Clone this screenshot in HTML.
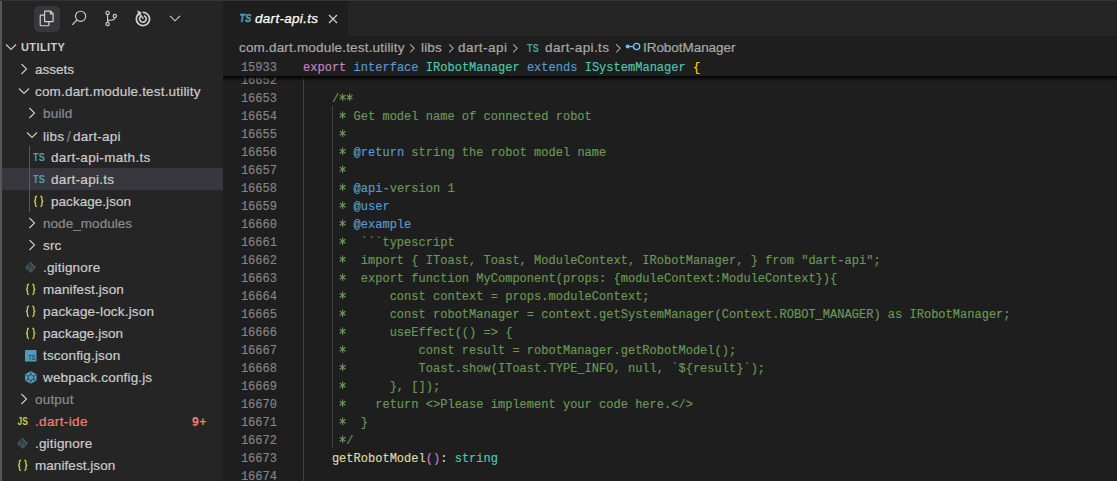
<!DOCTYPE html><html><head><meta charset="utf-8"><style>
*{margin:0;padding:0;box-sizing:border-box}
html,body{width:1117px;height:481px;overflow:hidden;background:#1e1e1e}
body{position:relative;font-family:"Liberation Sans",sans-serif}
#side{position:absolute;left:0;top:0;width:223px;height:481px;background:#252526;overflow:hidden}
#lb{position:absolute;left:0;top:0;width:2px;height:481px;background:#575757;z-index:9}
#topline{position:absolute;left:0;top:0;width:1117px;height:1px;background:#333333;z-index:10}
.abi{position:absolute;top:6px;width:26px;height:26px}
.abi.act{background:#37373d;border-radius:5px}
.row{position:absolute;left:0;width:223px;height:22px;font-size:13.5px;line-height:22px;color:#cccccc;white-space:nowrap;letter-spacing:0.18px}
.row.sel{background:#37373d;left:2px;width:221px}
.t{position:absolute;top:1px;-webkit-text-stroke:0.2px currentColor}
.ic{position:absolute;top:0}
.dim{color:#8c8c8c}
.red{color:#f08070}
#hdr{position:absolute;left:21px;top:36px;height:22px;line-height:22px;font-size:11px;font-weight:bold;color:#cccccc;letter-spacing:0.4px}
#editor{position:absolute;left:223px;top:0;width:894px;height:481px;background:#1e1e1e;overflow:hidden}
#tabs{position:absolute;left:0;top:0;width:894px;height:36px;background:#252526}
#tab{position:absolute;left:0;top:0;width:125px;height:36px;background:#1e1e1e}
#bc{position:absolute;left:0;top:37px;height:22px;width:894px;font-size:13.5px;line-height:22px;color:#a9a9a9;white-space:nowrap;letter-spacing:0.18px}
#bc span{position:absolute;top:0;-webkit-text-stroke:0.2px currentColor}
.code{font-family:"Liberation Mono",monospace;font-size:12.04px;line-height:18px;white-space:pre;height:18px;position:absolute;-webkit-text-stroke:0.15px currentColor}
.ln{left:0;width:54px;text-align:right;color:#858585}
.cl{left:80px}
#sticky{position:absolute;left:0;top:58px;width:894px;height:18px;background:#1e1e1e;z-index:5}
#shadow{position:absolute;left:0;top:76px;width:894px;height:5px;background:linear-gradient(rgba(0,0,0,0.95),rgba(0,0,0,0.7) 30%,rgba(0,0,0,0));z-index:5}
.c{color:#6a9955}.k{color:#569cd6}.p{color:#c586c0}.ty{color:#4ec9b0}.y{color:#ffd700}.f{color:#dcdcaa}.m{color:#da70d6}.w{color:#d4d4d4}.v{color:#9cdcfe}
.ast{vertical-align:top;display:inline-block}
.guide{position:absolute;width:1px;background:#404040}
</style></head><body>
<div id="topline"></div>
<div id="side"><div id="lb"></div>
<div class="abi act" style="left:34px"></div>
<svg style="position:absolute;left:34px;top:6px" width="26" height="26" viewBox="34 6 26 26" fill="none" stroke="#d4d4d4" stroke-width="1.15" stroke-linejoin="round">
<path d="M44.6 21.6 V11.8 Q44.6 11.1 45.3 11.1 H50.6 L53.1 13.6 V20.9 Q53.1 21.6 52.4 21.6 Z"/><path d="M50.4 11.2 V13.8 H53"/><path d="M44.4 15.1 H40.9 Q40.2 15.1 40.2 15.8 V25 Q40.2 25.7 40.9 25.7 H48.2 Q48.9 25.7 48.9 25 V21.8"/></svg>
<svg style="position:absolute;left:68px;top:6px" width="24" height="24" viewBox="68 6 24 24" fill="none" stroke="#cccccc" stroke-width="1.15">
<circle cx="80.6" cy="16.3" r="5.1"/><path d="M76.9 20 L72.3 24.8"/></svg>
<svg style="position:absolute;left:100px;top:6px" width="24" height="24" viewBox="100 6 24 24" fill="none" stroke="#cccccc" stroke-width="1.15">
<circle cx="107.6" cy="12.9" r="1.7"/><circle cx="107.6" cy="24" r="1.7"/><circle cx="114.8" cy="16" r="1.7"/><path d="M107.6 14.6 V22.3"/><path d="M114.8 17.7 C114.8 19.8 112.5 20.3 107.6 20.3"/></svg>
<svg style="position:absolute;left:132px;top:6px" width="24" height="24" viewBox="132 6 24 24" fill="none" stroke="#cfcfcf" stroke-width="1.6">
<path d="M139.6 13.3 A6.6 6.6 0 1 0 142.6 12.4"/><path d="M141 16.2 A3.3 3.3 0 1 0 143.8 15.7"/><path d="M138.5 12.2 L143.4 18.8" stroke-width="1.3"/><path d="M137.6 10.8 L141.4 12.7 L138.9 15.6 Z" fill="#cfcfcf" stroke-width="0.6"/></svg>
<svg style="position:absolute;left:168px;top:14px" width="14" height="9" viewBox="0 0 14 9" fill="none" stroke="#cccccc" stroke-width="1.15">
<path d="M2 1.8 L7 6.8 L12 1.8"/></svg>
<svg style="position:absolute;left:5px;top:43px" width="12" height="8" viewBox="0 0 12 8" fill="none" stroke="#cccccc" stroke-width="1.1"><path d="M1 1.5 L6 6.5 L11 1.5"/></svg>
<div id="hdr">UTILITY</div>
<div class="row" style="top:58px">
<svg style="position:absolute;left:20px;top:5px" width="8" height="12" viewBox="0 0 8 12" fill="none" stroke="#cccccc" stroke-width="1.1"><path d="M1.5 1 L6.5 6 L1.5 11"/></svg>
<span class="t" style="left:35px;letter-spacing:0.0px">assets</span>
</div>
<div class="row" style="top:80px">
<svg style="position:absolute;left:18px;top:7px" width="12" height="8" viewBox="0 0 12 8" fill="none" stroke="#cccccc" stroke-width="1.1"><path d="M1 1.5 L6 6.5 L11 1.5"/></svg>
<span class="t" style="left:35px;letter-spacing:0.18px">com.dart.module.test.utility</span>
</div>
<div class="row" style="top:102px">
<svg style="position:absolute;left:28px;top:5px" width="8" height="12" viewBox="0 0 8 12" fill="none" stroke="#cccccc" stroke-width="1.1"><path d="M1.5 1 L6.5 6 L1.5 11"/></svg>
<span class="t dim" style="left:43px;letter-spacing:0.18px">build</span>
</div>
<div class="row" style="top:124px">
<svg style="position:absolute;left:26px;top:7px" width="12" height="8" viewBox="0 0 12 8" fill="none" stroke="#cccccc" stroke-width="1.1"><path d="M1 1.5 L6 6.5 L11 1.5"/></svg>
<span class="t" style="left:43px;letter-spacing:0.25px">libs<span style="color:#8a8a8a;padding:0 2px 0 2.5px;font-size:14.5px;position:relative;top:0.5px;-webkit-text-stroke:0">/</span>dart-api</span>
</div>
<div class="row" style="top:146px">
<svg class="ic" style="left:33px;top:6px" width="13" height="10" viewBox="0 0 13 10"><text x="0" y="9.3" font-family="Liberation Sans" font-weight="bold" font-size="10.6" textLength="12" lengthAdjust="spacingAndGlyphs" fill="#519aba">TS</text></svg>
<span class="t" style="left:51px;letter-spacing:0.32px">dart-api-math.ts</span>
</div>
<div class="row sel" style="top:168px">
<svg class="ic" style="left:31px;top:6px" width="13" height="10" viewBox="0 0 13 10"><text x="0" y="9.3" font-family="Liberation Sans" font-weight="bold" font-size="10.6" textLength="12" lengthAdjust="spacingAndGlyphs" fill="#519aba">TS</text></svg>
<span class="t" style="left:49px;letter-spacing:0.31px">dart-api.ts</span>
</div>
<div class="row" style="top:190px">
<svg class="ic" style="left:33px;top:5px" width="12" height="13" viewBox="0 0 12 13" fill="none" stroke="#cbcb41" stroke-width="1.35"><path d="M4 1.2 C2.6 1.2 2.4 1.9 2.4 3 V5 C2.4 5.9 2 6.4 0.9 6.4 C2 6.4 2.4 6.9 2.4 7.8 V9.8 C2.4 10.9 2.6 11.6 4 11.6"/><path d="M7.3 1.2 C8.7 1.2 8.9 1.9 8.9 3 V5 C8.9 5.9 9.3 6.4 10.4 6.4 C9.3 6.4 8.9 6.9 8.9 7.8 V9.8 C8.9 10.9 8.7 11.6 7.3 11.6"/></svg>
<span class="t" style="left:51px;letter-spacing:0.04px">package.json</span>
</div>
<div class="row" style="top:212px">
<svg style="position:absolute;left:28px;top:5px" width="8" height="12" viewBox="0 0 8 12" fill="none" stroke="#cccccc" stroke-width="1.1"><path d="M1.5 1 L6.5 6 L1.5 11"/></svg>
<span class="t dim" style="left:43px;letter-spacing:0.05px">node_modules</span>
</div>
<div class="row" style="top:234px">
<svg style="position:absolute;left:28px;top:5px" width="8" height="12" viewBox="0 0 8 12" fill="none" stroke="#cccccc" stroke-width="1.1"><path d="M1.5 1 L6.5 6 L1.5 11"/></svg>
<span class="t" style="left:43px;letter-spacing:0.18px">src</span>
</div>
<div class="row" style="top:256px">
<svg class="ic" style="left:25px;top:5px" width="12" height="13" viewBox="0 0 12 13"><path d="M5.6 0.7 L11.2 6.3 L5.6 11.9 L0 6.3 Z" fill="#41535b"/><path d="M4.3 3.2 V8.6 M4.3 3.2 L7.3 6.2 V8.4" stroke="#252526" stroke-width="0.8" fill="none"/></svg>
<span class="t" style="left:43px;letter-spacing:0.18px">.gitignore</span>
</div>
<div class="row" style="top:278px">
<svg class="ic" style="left:25px;top:5px" width="12" height="13" viewBox="0 0 12 13" fill="none" stroke="#cbcb41" stroke-width="1.35"><path d="M4 1.2 C2.6 1.2 2.4 1.9 2.4 3 V5 C2.4 5.9 2 6.4 0.9 6.4 C2 6.4 2.4 6.9 2.4 7.8 V9.8 C2.4 10.9 2.6 11.6 4 11.6"/><path d="M7.3 1.2 C8.7 1.2 8.9 1.9 8.9 3 V5 C8.9 5.9 9.3 6.4 10.4 6.4 C9.3 6.4 8.9 6.9 8.9 7.8 V9.8 C8.9 10.9 8.7 11.6 7.3 11.6"/></svg>
<span class="t" style="left:43px;letter-spacing:0.11px">manifest.json</span>
</div>
<div class="row" style="top:300px">
<svg class="ic" style="left:25px;top:5px" width="12" height="13" viewBox="0 0 12 13" fill="none" stroke="#cbcb41" stroke-width="1.35"><path d="M4 1.2 C2.6 1.2 2.4 1.9 2.4 3 V5 C2.4 5.9 2 6.4 0.9 6.4 C2 6.4 2.4 6.9 2.4 7.8 V9.8 C2.4 10.9 2.6 11.6 4 11.6"/><path d="M7.3 1.2 C8.7 1.2 8.9 1.9 8.9 3 V5 C8.9 5.9 9.3 6.4 10.4 6.4 C9.3 6.4 8.9 6.9 8.9 7.8 V9.8 C8.9 10.9 8.7 11.6 7.3 11.6"/></svg>
<span class="t" style="left:43px;letter-spacing:0.18px">package-lock.json</span>
</div>
<div class="row" style="top:322px">
<svg class="ic" style="left:25px;top:5px" width="12" height="13" viewBox="0 0 12 13" fill="none" stroke="#cbcb41" stroke-width="1.35"><path d="M4 1.2 C2.6 1.2 2.4 1.9 2.4 3 V5 C2.4 5.9 2 6.4 0.9 6.4 C2 6.4 2.4 6.9 2.4 7.8 V9.8 C2.4 10.9 2.6 11.6 4 11.6"/><path d="M7.3 1.2 C8.7 1.2 8.9 1.9 8.9 3 V5 C8.9 5.9 9.3 6.4 10.4 6.4 C9.3 6.4 8.9 6.9 8.9 7.8 V9.8 C8.9 10.9 8.7 11.6 7.3 11.6"/></svg>
<span class="t" style="left:43px;letter-spacing:0.05px">package.json</span>
</div>
<div class="row" style="top:344px">
<svg class="ic" style="left:25px;top:6px" width="12" height="12" viewBox="0 0 12 12"><rect x="0" y="0" width="11.5" height="11.5" fill="#519aba"/><text x="3.4" y="10.2" font-family="Liberation Sans" font-size="7" textLength="7" lengthAdjust="spacingAndGlyphs" fill="#252526">TS</text></svg>
<span class="t" style="left:43px;letter-spacing:0.18px">tsconfig.json</span>
</div>
<div class="row" style="top:366px">
<svg class="ic" style="left:25px;top:5px" width="12" height="13" viewBox="0 0 12 13"><path d="M5.8 0 L11.6 3.2 V9.6 L5.8 12.8 L0 9.6 V3.2 Z" fill="#519aba"/><path d="M5.8 3.6 L8.6 5.1 V8.1 L5.8 9.6 L3 8.1 V5.1 Z M5.8 3.6 V0.8 M8.6 5.1 L11 3.8 M3 5.1 L0.6 3.8 M5.8 9.6 V12 M8.6 8.1 L11 9.3 M3 8.1 L0.6 9.3" stroke="#252526" stroke-width="0.7" fill="none"/></svg>
<span class="t" style="left:43px;letter-spacing:0.16px">webpack.config.js</span>
</div>
<div class="row" style="top:388px">
<svg style="position:absolute;left:20px;top:5px" width="8" height="12" viewBox="0 0 8 12" fill="none" stroke="#cccccc" stroke-width="1.1"><path d="M1.5 1 L6.5 6 L1.5 11"/></svg>
<span class="t dim" style="left:35px;letter-spacing:0.2px">output</span>
</div>
<div class="row" style="top:410px">
<svg class="ic" style="left:17px;top:6px" width="13" height="10" viewBox="0 0 13 10"><text x="0.4" y="9.1" font-family="Liberation Sans" font-weight="bold" font-size="10.4" textLength="10.6" lengthAdjust="spacingAndGlyphs" fill="#cbcb41">JS</text></svg>
<span class="t red" style="left:35px;letter-spacing:0.36px">.dart-ide</span>
<span class="t red" style="left:192px;top:0.5px;font-weight:bold;font-size:12px;letter-spacing:0.7px;-webkit-text-stroke:0">9+</span>
</div>
<div class="row" style="top:432px">
<svg class="ic" style="left:17px;top:5px" width="12" height="13" viewBox="0 0 12 13"><path d="M5.6 0.7 L11.2 6.3 L5.6 11.9 L0 6.3 Z" fill="#41535b"/><path d="M4.3 3.2 V8.6 M4.3 3.2 L7.3 6.2 V8.4" stroke="#252526" stroke-width="0.8" fill="none"/></svg>
<span class="t" style="left:35px;letter-spacing:0.18px">.gitignore</span>
</div>
<div class="row" style="top:454px">
<svg class="ic" style="left:17px;top:5px" width="12" height="13" viewBox="0 0 12 13" fill="none" stroke="#cbcb41" stroke-width="1.35"><path d="M4 1.2 C2.6 1.2 2.4 1.9 2.4 3 V5 C2.4 5.9 2 6.4 0.9 6.4 C2 6.4 2.4 6.9 2.4 7.8 V9.8 C2.4 10.9 2.6 11.6 4 11.6"/><path d="M7.3 1.2 C8.7 1.2 8.9 1.9 8.9 3 V5 C8.9 5.9 9.3 6.4 10.4 6.4 C9.3 6.4 8.9 6.9 8.9 7.8 V9.8 C8.9 10.9 8.7 11.6 7.3 11.6"/></svg>
<span class="t" style="left:35px;letter-spacing:0.06px">manifest.json</span>
</div>
<div class="guide" style="left:29px;top:146px;height:66px;background:#585858"></div>
</div>
<div id="editor">
<div id="tabs"><div id="tab">
<svg style="position:absolute;left:16px;top:13px" width="14" height="10" viewBox="0 0 14 10"><text x="0.6" y="8.9" font-family="Liberation Sans" font-style="italic" font-weight="bold" font-size="10.6" textLength="11.6" lengthAdjust="spacingAndGlyphs" fill="#519aba" stroke="#519aba" stroke-width="0.45">TS</text></svg>
<span style="position:absolute;left:32px;top:1px;line-height:35px;font-size:13.5px;font-style:italic;color:#ffffff;letter-spacing:0.3px;-webkit-text-stroke:0.25px #fff">dart-api.ts</span>
<svg style="position:absolute;left:105px;top:14px" width="10" height="10" viewBox="0 0 10 10" stroke="#d0d0d0" stroke-width="1.15"><path d="M1 1 L9 9 M9 1 L1 9"/></svg>
</div></div>
<div id="bc">
<span style="left:16px">com.dart.module.test.utility</span>
<svg style="position:absolute;left:186px;top:6px" width="7" height="11" viewBox="0 0 7 11" fill="none" stroke="#a9a9a9" stroke-width="1.05"><path d="M1.2 1.3 L5.2 5.3 L1.2 9.3"/></svg>
<span style="left:198px">libs</span>
<svg style="position:absolute;left:225px;top:6px" width="7" height="11" viewBox="0 0 7 11" fill="none" stroke="#a9a9a9" stroke-width="1.05"><path d="M1.2 1.3 L5.2 5.3 L1.2 9.3"/></svg>
<span style="left:235px;letter-spacing:0.45px">dart-api</span>
<svg style="position:absolute;left:289px;top:6px" width="7" height="11" viewBox="0 0 7 11" fill="none" stroke="#a9a9a9" stroke-width="1.05"><path d="M1.2 1.3 L5.2 5.3 L1.2 9.3"/></svg>
<svg style="position:absolute;left:303px;top:6px" width="13" height="10" viewBox="0 0 13 10"><text x="1" y="8.6" font-family="Liberation Sans" font-weight="bold" font-size="10.2" textLength="11.8" lengthAdjust="spacingAndGlyphs" fill="#519aba">TS</text></svg>
<span style="left:322px;letter-spacing:0.4px">dart-api.ts</span>
<svg style="position:absolute;left:392px;top:6px" width="7" height="11" viewBox="0 0 7 11" fill="none" stroke="#a9a9a9" stroke-width="1.05"><path d="M1.2 1.3 L5.2 5.3 L1.2 9.3"/></svg>
<svg style="position:absolute;left:401px;top:5px" width="18" height="9" viewBox="0 0 18 9" fill="none" stroke="#75beff" stroke-width="1.3"><circle cx="3.6" cy="4.5" r="1.9" fill="#75beff" stroke="none"/><path d="M4.5 4.5 H9.5"/><circle cx="12.6" cy="4.5" r="3.1"/></svg>
<span style="left:420px;letter-spacing:-0.05px">IRobotManager</span>
</div>
<div class="code ln" style="top:72px">16652</div>
<div class="code cl" style="top:72px"></div>
<div class="code ln" style="top:90px">16653</div>
<div class="code cl" style="top:90px"><span class="w">    </span><span class="c">/<svg class="ast" width="7.224" height="18" viewBox="0 0 7.224 18"><path d="M3.612 3.4 V11 M0.7 5.2 L6.5 9.2 M0.7 9.2 L6.5 5.2" stroke="#6a9955" stroke-width="1.1"/></svg><svg class="ast" width="7.224" height="18" viewBox="0 0 7.224 18"><path d="M3.612 3.4 V11 M0.7 5.2 L6.5 9.2 M0.7 9.2 L6.5 5.2" stroke="#6a9955" stroke-width="1.1"/></svg></span></div>
<div class="code ln" style="top:108px">16654</div>
<div class="code cl" style="top:108px"><span class="w">     </span><span class="c"><svg class="ast" width="7.224" height="18" viewBox="0 0 7.224 18"><path d="M3.612 3.4 V11 M0.7 5.2 L6.5 9.2 M0.7 9.2 L6.5 5.2" stroke="#6a9955" stroke-width="1.1"/></svg> Get model name of connected robot</span></div>
<div class="code ln" style="top:126px">16655</div>
<div class="code cl" style="top:126px"><span class="w">     </span><span class="c"><svg class="ast" width="7.224" height="18" viewBox="0 0 7.224 18"><path d="M3.612 3.4 V11 M0.7 5.2 L6.5 9.2 M0.7 9.2 L6.5 5.2" stroke="#6a9955" stroke-width="1.1"/></svg></span></div>
<div class="code ln" style="top:144px">16656</div>
<div class="code cl" style="top:144px"><span class="w">     </span><span class="c"><svg class="ast" width="7.224" height="18" viewBox="0 0 7.224 18"><path d="M3.612 3.4 V11 M0.7 5.2 L6.5 9.2 M0.7 9.2 L6.5 5.2" stroke="#6a9955" stroke-width="1.1"/></svg> </span><span class="k">@return</span><span class="c"> string the robot model name</span></div>
<div class="code ln" style="top:162px">16657</div>
<div class="code cl" style="top:162px"><span class="w">     </span><span class="c"><svg class="ast" width="7.224" height="18" viewBox="0 0 7.224 18"><path d="M3.612 3.4 V11 M0.7 5.2 L6.5 9.2 M0.7 9.2 L6.5 5.2" stroke="#6a9955" stroke-width="1.1"/></svg></span></div>
<div class="code ln" style="top:180px">16658</div>
<div class="code cl" style="top:180px"><span class="w">     </span><span class="c"><svg class="ast" width="7.224" height="18" viewBox="0 0 7.224 18"><path d="M3.612 3.4 V11 M0.7 5.2 L6.5 9.2 M0.7 9.2 L6.5 5.2" stroke="#6a9955" stroke-width="1.1"/></svg> </span><span class="k">@api</span><span class="c">-version 1</span></div>
<div class="code ln" style="top:198px">16659</div>
<div class="code cl" style="top:198px"><span class="w">     </span><span class="c"><svg class="ast" width="7.224" height="18" viewBox="0 0 7.224 18"><path d="M3.612 3.4 V11 M0.7 5.2 L6.5 9.2 M0.7 9.2 L6.5 5.2" stroke="#6a9955" stroke-width="1.1"/></svg> </span><span class="k">@user</span></div>
<div class="code ln" style="top:216px">16660</div>
<div class="code cl" style="top:216px"><span class="w">     </span><span class="c"><svg class="ast" width="7.224" height="18" viewBox="0 0 7.224 18"><path d="M3.612 3.4 V11 M0.7 5.2 L6.5 9.2 M0.7 9.2 L6.5 5.2" stroke="#6a9955" stroke-width="1.1"/></svg> </span><span class="k">@example</span></div>
<div class="code ln" style="top:234px">16661</div>
<div class="code cl" style="top:234px"><span class="w">     </span><span class="c"><svg class="ast" width="7.224" height="18" viewBox="0 0 7.224 18"><path d="M3.612 3.4 V11 M0.7 5.2 L6.5 9.2 M0.7 9.2 L6.5 5.2" stroke="#6a9955" stroke-width="1.1"/></svg>  ```typescript</span></div>
<div class="code ln" style="top:252px">16662</div>
<div class="code cl" style="top:252px"><span class="w">     </span><span class="c"><svg class="ast" width="7.224" height="18" viewBox="0 0 7.224 18"><path d="M3.612 3.4 V11 M0.7 5.2 L6.5 9.2 M0.7 9.2 L6.5 5.2" stroke="#6a9955" stroke-width="1.1"/></svg>  import { IToast, Toast, ModuleContext, IRobotManager, } from "dart-api";</span></div>
<div class="code ln" style="top:270px">16663</div>
<div class="code cl" style="top:270px"><span class="w">     </span><span class="c"><svg class="ast" width="7.224" height="18" viewBox="0 0 7.224 18"><path d="M3.612 3.4 V11 M0.7 5.2 L6.5 9.2 M0.7 9.2 L6.5 5.2" stroke="#6a9955" stroke-width="1.1"/></svg>  export function MyComponent(props: {moduleContext:ModuleContext}){</span></div>
<div class="code ln" style="top:288px">16664</div>
<div class="code cl" style="top:288px"><span class="w">     </span><span class="c"><svg class="ast" width="7.224" height="18" viewBox="0 0 7.224 18"><path d="M3.612 3.4 V11 M0.7 5.2 L6.5 9.2 M0.7 9.2 L6.5 5.2" stroke="#6a9955" stroke-width="1.1"/></svg>      const context = props.moduleContext;</span></div>
<div class="code ln" style="top:306px">16665</div>
<div class="code cl" style="top:306px"><span class="w">     </span><span class="c"><svg class="ast" width="7.224" height="18" viewBox="0 0 7.224 18"><path d="M3.612 3.4 V11 M0.7 5.2 L6.5 9.2 M0.7 9.2 L6.5 5.2" stroke="#6a9955" stroke-width="1.1"/></svg>      const robotManager = context.getSystemManager(Context.ROBOT_MANAGER) as IRobotManager;</span></div>
<div class="code ln" style="top:324px">16666</div>
<div class="code cl" style="top:324px"><span class="w">     </span><span class="c"><svg class="ast" width="7.224" height="18" viewBox="0 0 7.224 18"><path d="M3.612 3.4 V11 M0.7 5.2 L6.5 9.2 M0.7 9.2 L6.5 5.2" stroke="#6a9955" stroke-width="1.1"/></svg>      useEffect(() =&gt; {</span></div>
<div class="code ln" style="top:342px">16667</div>
<div class="code cl" style="top:342px"><span class="w">     </span><span class="c"><svg class="ast" width="7.224" height="18" viewBox="0 0 7.224 18"><path d="M3.612 3.4 V11 M0.7 5.2 L6.5 9.2 M0.7 9.2 L6.5 5.2" stroke="#6a9955" stroke-width="1.1"/></svg>          const result = robotManager.getRobotModel();</span></div>
<div class="code ln" style="top:360px">16668</div>
<div class="code cl" style="top:360px"><span class="w">     </span><span class="c"><svg class="ast" width="7.224" height="18" viewBox="0 0 7.224 18"><path d="M3.612 3.4 V11 M0.7 5.2 L6.5 9.2 M0.7 9.2 L6.5 5.2" stroke="#6a9955" stroke-width="1.1"/></svg>          Toast.show(IToast.TYPE_INFO, null, `${result}`);</span></div>
<div class="code ln" style="top:378px">16669</div>
<div class="code cl" style="top:378px"><span class="w">     </span><span class="c"><svg class="ast" width="7.224" height="18" viewBox="0 0 7.224 18"><path d="M3.612 3.4 V11 M0.7 5.2 L6.5 9.2 M0.7 9.2 L6.5 5.2" stroke="#6a9955" stroke-width="1.1"/></svg>      }, []);</span></div>
<div class="code ln" style="top:396px">16670</div>
<div class="code cl" style="top:396px"><span class="w">     </span><span class="c"><svg class="ast" width="7.224" height="18" viewBox="0 0 7.224 18"><path d="M3.612 3.4 V11 M0.7 5.2 L6.5 9.2 M0.7 9.2 L6.5 5.2" stroke="#6a9955" stroke-width="1.1"/></svg>    return &lt;&gt;Please implement your code here.&lt;/&gt;</span></div>
<div class="code ln" style="top:414px">16671</div>
<div class="code cl" style="top:414px"><span class="w">     </span><span class="c"><svg class="ast" width="7.224" height="18" viewBox="0 0 7.224 18"><path d="M3.612 3.4 V11 M0.7 5.2 L6.5 9.2 M0.7 9.2 L6.5 5.2" stroke="#6a9955" stroke-width="1.1"/></svg>  }</span></div>
<div class="code ln" style="top:432px">16672</div>
<div class="code cl" style="top:432px"><span class="w">     </span><span class="c"><svg class="ast" width="7.224" height="18" viewBox="0 0 7.224 18"><path d="M3.612 3.4 V11 M0.7 5.2 L6.5 9.2 M0.7 9.2 L6.5 5.2" stroke="#6a9955" stroke-width="1.1"/></svg>/</span></div>
<div class="code ln" style="top:450px">16673</div>
<div class="code cl" style="top:450px"><span class="w">    </span><span class="f">getRobotModel</span><span class="m">()</span><span class="w">: </span><span class="ty">string</span></div>
<div class="code ln" style="top:468px">16674</div>
<div class="code cl" style="top:468px"></div>
<div class="guide" style="left:80px;top:58px;height:423px"></div>
<div class="guide" style="left:109px;top:106px;height:342px"></div>
<div id="sticky">
<div class="code ln" style="top:1px">15933</div>
<div class="code cl" style="top:1px"><span class="p">export</span> <span class="k">interface</span> <span class="ty">IRobotManager</span> <span class="k">extends</span> <span class="ty">ISystemManager</span> <span class="y">{</span></div>
</div><div id="shadow"></div>
</div>
</body></html>
